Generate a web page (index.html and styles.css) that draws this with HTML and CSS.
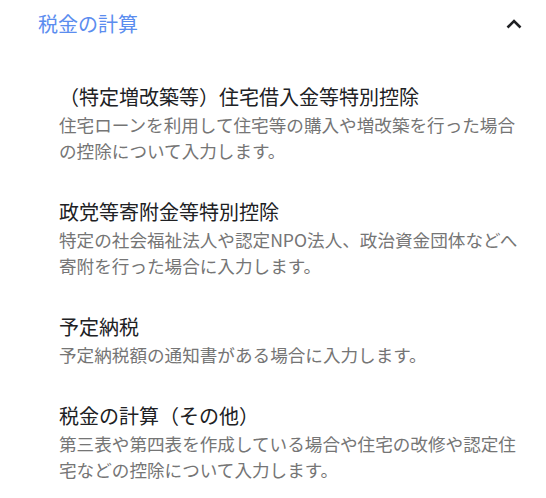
FILE: index.html
```html
<!DOCTYPE html>
<html lang="ja">
<head>
<meta charset="utf-8">
<title>税金の計算</title>
<link rel="stylesheet" href="styles.css">
</head>
<body>
<section class="panel">
  <div class="panel-header">
    <span class="panel-title">税金の計算</span>
    <svg class="chevron" width="16" height="12" viewBox="0 0 16 12" aria-hidden="true"><polyline points="1.5,9.5 8,3 14.5,9.5" fill="none" stroke="#202124" stroke-width="2.6"/></svg>
  </div>
  <ul class="items">
    <li class="item">
      <div class="item-title">（特定増改築等）住宅借入金等特別控除</div>
      <div class="item-desc">住宅ローンを利用して住宅等の購入や増改築を行った場合の控除について入力します。</div>
    </li>
    <li class="item">
      <div class="item-title">政党等寄附金等特別控除</div>
      <div class="item-desc">特定の社会福祉法人や認定NPO法人、政治資金団体などへ寄附を行った場合に入力します。</div>
    </li>
    <li class="item">
      <div class="item-title">予定納税</div>
      <div class="item-desc">予定納税額の通知書がある場合に入力します。</div>
    </li>
    <li class="item">
      <div class="item-title">税金の計算（その他）</div>
      <div class="item-desc">第三表や第四表を作成している場合や住宅の改修や認定住宅などの控除について入力します。</div>
    </li>
  </ul>
</section>
</body>
</html>
```

FILE: styles.css
```css
html, body {
  margin: 0;
  padding: 0;
  background: #ffffff;
}
body {
  font-family: "Noto Sans CJK JP", "Noto Sans", sans-serif;
}
.panel {
  width: 546px;
}
.panel-header {
  height: 48px;
  display: flex;
  align-items: center;
  justify-content: space-between;
  padding: 0 24px 0 38px;
  box-sizing: border-box;
}
.panel-title {
  font-size: 20px;
  line-height: 28px;
  color: #5b8def;
}
.chevron {
  display: block;
}
.items {
  list-style: none;
  margin: 0;
  padding: 34px 21px 0 59px;
}
.item {
  margin-bottom: 33px;
}
.item-title {
  font-size: 20px;
  line-height: 30px;
  color: #202124;
}
.item-desc {
  font-size: 17.6px;
  line-height: 26px;
  color: #757575;
}
```
